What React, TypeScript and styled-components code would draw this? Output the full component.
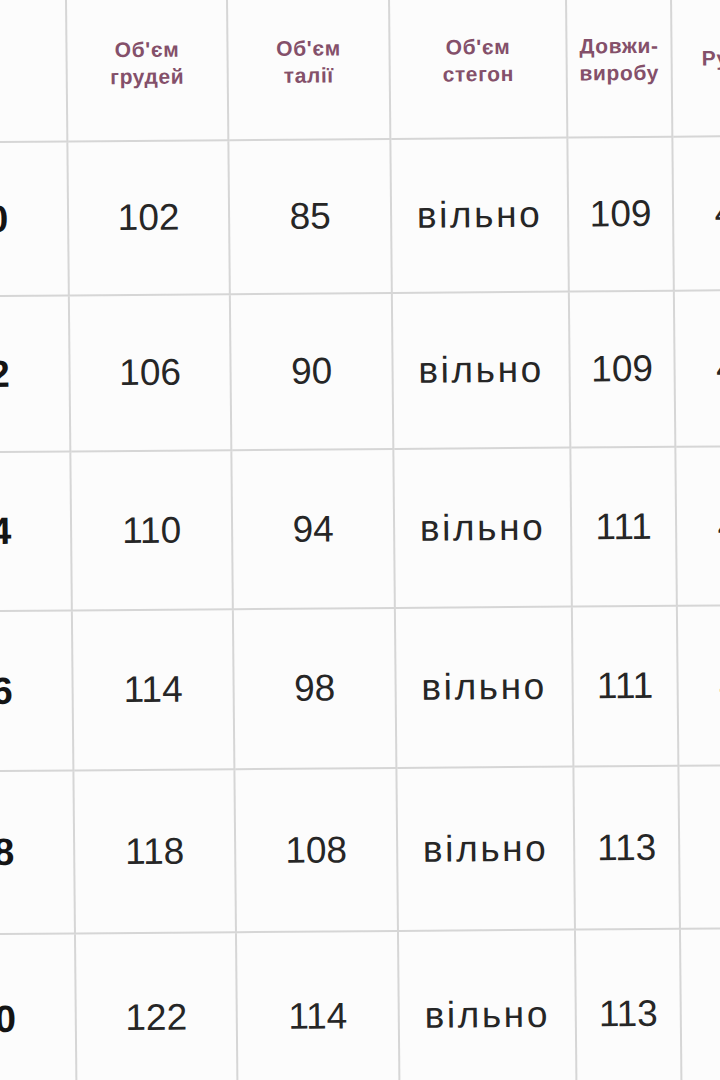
import React from "react";
import styled, {createGlobalStyle} from "styled-components";

const GlobalStyle = createGlobalStyle`
  html, body {
    margin: 0;
    padding: 0;
    overflow: hidden;
    background: #fcfcfc;
  }
`

const Page = styled.div`
  width: 720px;
  height: 1080px;
  overflow: hidden;
  background: #fcfcfc;
  font-family: "Liberation Sans", Arial, sans-serif;
`

// photo of a printed table: slight skew, first column runs off the left edge
const Table = styled.div`
  display: grid;
  grid-template-columns: 162px 161px 162px 177px 105px 124px;
  grid-template-rows: 143px 154px 156px 159px 160px 163px 170px;
  margin-left: -95px;
  width: max-content;
  transform: skew(0.55deg, -0.45deg);
  transform-origin: 95px 0;
`

const HeadCell = styled.div`
  box-sizing: border-box;
  display: flex;
  flex-direction: column;
  align-items: center;
  justify-content: center;
  padding-bottom: 14px;
  border-right: 2px solid #d6d6d6;
  border-bottom: 2px solid #d6d6d6;
  font-size: 21px;
  line-height: 27px;
  font-weight: 600;
  letter-spacing: 0.6px;
  color: #84506a;
  text-align: center;
`

const Cell = styled.div<{ $bold?: boolean; $wide?: boolean }>`
  box-sizing: border-box;
  display: flex;
  align-items: center;
  justify-content: center;
  border-right: 2px solid #d6d6d6;
  border-bottom: 2px solid #d6d6d6;
  font-size: ${p => p.$bold ? "38px" : "37px"};
  font-weight: ${p => p.$bold ? 700 : 400};
  letter-spacing: ${p => p.$wide ? "2.6px" : "0"};
  color: ${p => p.$bold ? "#141414" : "#262626"};
`

const headers = [
    [],
    ["Об'єм", "грудей"],
    ["Об'єм", "талії"],
    ["Об'єм", "стегон"],
    ["Довжи-", "виробу"],
    ["Рукав"],
]

const rows = [
    ["50", "102", "85", "вільно", "109", "45"],
    ["52", "106", "90", "вільно", "109", "45"],
    ["54", "110", "94", "вільно", "111", "46"],
    ["56", "114", "98", "вільно", "111", "46"],
    ["58", "118", "108", "вільно", "113", "47"],
    ["60", "122", "114", "вільно", "113", "47"],
    ["", "", "", "", "", ""],
]

export default function App() {
    return (
        <Page>
            <GlobalStyle/>
            <Table>
                {headers.map((lines, i) => (
                    <HeadCell key={"h" + i}>
                        {lines.map(l => <span key={l}>{l}</span>)}
                    </HeadCell>
                ))}
                {rows.map((row, r) => row.map((value, c) => (
                    <Cell key={r + "-" + c} $bold={c === 0} $wide={value === "вільно"}>
                        {value}
                    </Cell>
                )))}
            </Table>
        </Page>
    )
}
